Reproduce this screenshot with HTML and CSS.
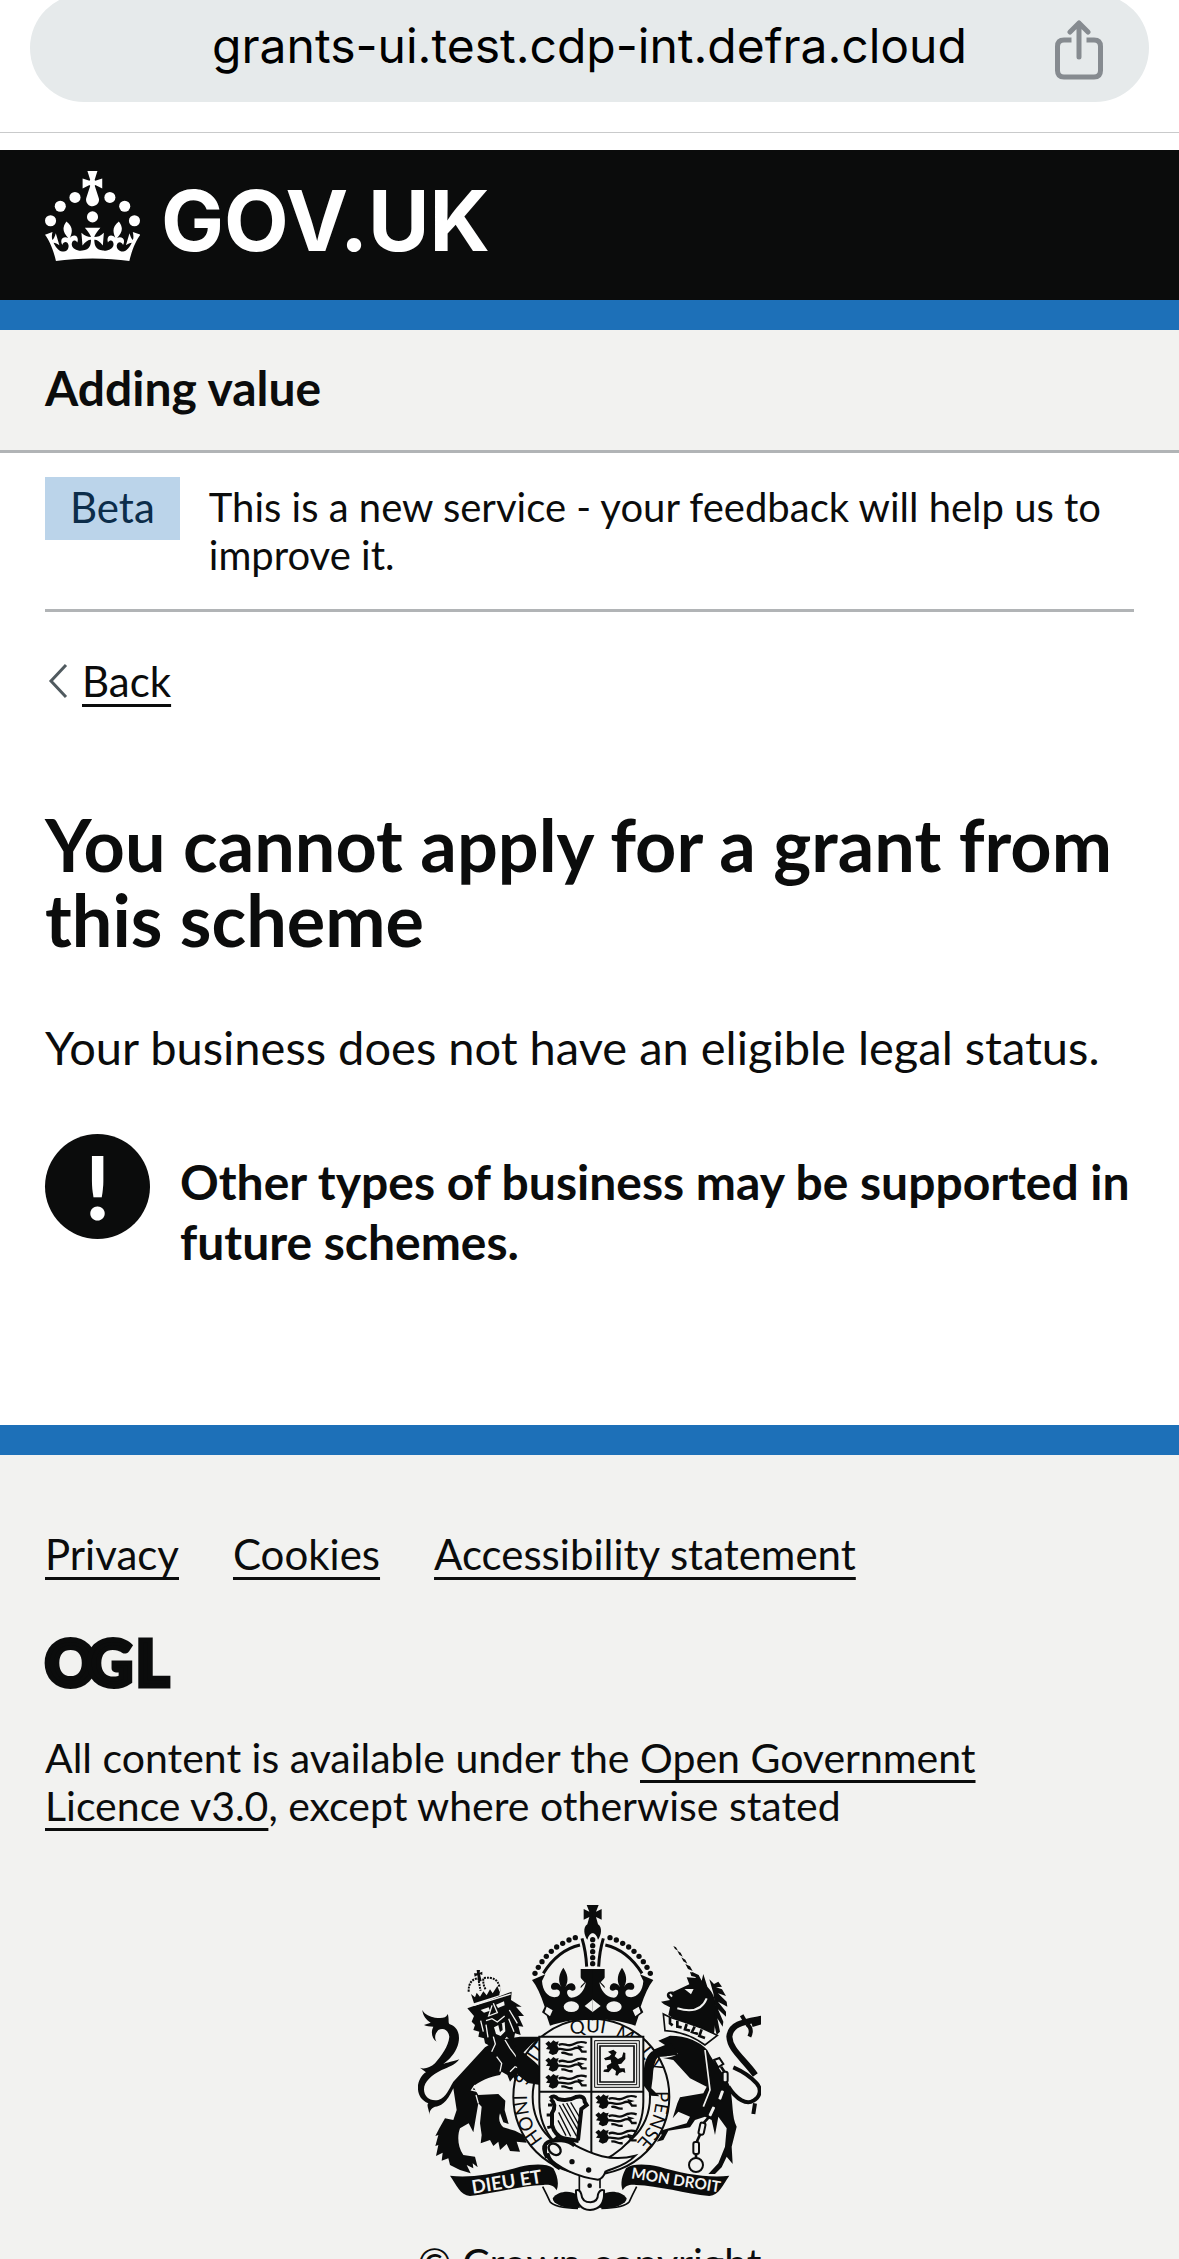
FILE: index.html
```
<!DOCTYPE html>
<html lang="en">
<head>
<meta charset="utf-8">
<meta name="viewport" content="width=device-width, initial-scale=1">
<title>You cannot apply for a grant from this scheme - Adding value</title>
<link rel="stylesheet" href="styles.css">
</head>
<body>
<div class="browser-bar">
  <div class="address">
    <input class="address-input" type="text" aria-label="Address" value="grants-ui.test.cdp-int.defra.cloud">
    <button class="share" type="button" aria-label="Share">
      <svg width="48" height="60" viewBox="0 0 48 60" fill="none" stroke="#868b90" stroke-width="5">
        <path d="M16.500 20H9q-6.500 0-6.500 6.500v24q0 6.500 6.500 6.500h30q6.500 0 6.500-6.500v-24q0-6.500-6.500-6.500h-7.500"/>
        <path d="M24 37V3M15 12l9-9 9 9" stroke-linecap="round" stroke-linejoin="round"/>
      </svg>
    </button>
  </div>
</div>

<header class="header">
  <a class="logo" href="#" aria-label="GOV.UK">
    <svg class="crown" viewBox="0 0 63.4 60" fill="#fff" aria-hidden="true">
      <circle cx="20" cy="17.600" r="3.700"/><circle cx="10.200" cy="23.500" r="3.700"/><circle cx="3.700" cy="33.200" r="3.700"/><circle cx="31.700" cy="30.600" r="3.700"/><circle cx="43.300" cy="17.600" r="3.700"/><circle cx="53.200" cy="23.500" r="3.700"/><circle cx="59.700" cy="33.200" r="3.700"/>
      <path d="M33.1,9.8c.2-.1.3-.3.5-.5l4.6,2.4v-6.8l-4.6,1.5c-.1-.2-.3-.3-.5-.5l1.9-5.9h-6.7l1.9,5.9c-.2.1-.3.3-.5.5l-4.6-1.5v6.8l4.6-2.4c.1.2.3.3.5.5l-2.6,8c-.9,2.8,1.2,5.7,4.1,5.7h0c3,0,5.1-2.9,4.1-5.7l-2.6-8ZM37,37.9s-3.4,3.8-4.1,6.1c2.2,0,4.2-.5,6.4-2.8l-.7,8.5c-2-2.8-4.4-4.1-5.7-3.8.1,3.1.5,6.7,5.8,7.2,3.7.3,6.7-1.5,7-3.8.4-2.6-2-4.3-3.7-1.6-1.4-4.5,2.4-6.1,4.9-3.2-1.9-4.5-1.8-7.7,2.4-10.9,3,4,2.6,7.3-1.2,11.1,2.4-1.3,6.2,0,4,4.6-1.2-2.8-3.7-2.2-4.2.2-.3,1.7.7,3.7,3,4.2,1.9.3,4.7-.9,7-5.9-1.3,0-2.4.7-3.9,1.7l2.4-8c.6,2.3,1.4,3.7,2.2,4.5.6-1.6.5-2.8,0-5.3l5,1.8c-2.6,3.6-5.2,8.7-7.3,17.5-7.4-1.1-15.7-1.7-24.5-1.7h0c-8.8,0-17.1.6-24.5,1.7-2.1-8.9-4.7-13.9-7.3-17.5l5-1.8c-.5,2.5-.6,3.7,0,5.3.8-.8,1.6-2.3,2.2-4.5l2.4,8c-1.5-1-2.6-1.7-3.9-1.7,2.3,5,5.2,6.2,7,5.9,2.3-.4,3.3-2.4,3-4.2-.5-2.4-3-3.1-4.2-.2-2.2-4.6,1.6-6,4-4.6-3.7-3.7-4.2-7.1-1.2-11.1,4.2,3.2,4.3,6.4,2.4,10.9,2.5-2.8,6.3-1.3,4.9,3.2-1.8-2.7-4.1-1-3.7,1.6.3,2.3,3.3,4.1,7,3.8,5.4-.5,5.7-4.2,5.8-7.2-1.3-.2-3.7,1-5.7,3.8l-.7-8.5c2.2,2.3,4.2,2.7,6.4,2.8-.7-2.3-4.1-6.1-4.1-6.1h10.6,0Z"/>
    </svg>
    <span class="logo-text">GOV.UK</span>
  </a>
</header>

<div class="service">Adding value</div>

<div class="container">
  <div class="phase">
    <strong class="tag">Beta</strong>
    <span class="phase-text">This is a new service - your feedback will help us to improve it.</span>
  </div>
  <a class="back" href="#">
    <svg class="back-arrow" width="20" height="36" viewBox="0 0 20 36" fill="none" stroke="#505a5f" stroke-width="3" aria-hidden="true"><path d="M18 2L3 18l15 16"/></svg>
    <span class="back-text">Back</span>
  </a>
  <main class="main">
    <h1 class="title">You cannot apply for a grant from this scheme</h1>
    <p class="body-text">Your business does not have an eligible legal status.</p>
    <div class="warning">
      <span class="warning-icon" aria-hidden="true">!</span>
      <strong class="warning-text">Other types of business may be supported in future schemes.</strong>
    </div>
  </main>
</div>

<footer class="footer">
  <nav class="footer-links" aria-label="Support links">
    <a class="link" href="#">Privacy</a>
    <a class="link" href="#">Cookies</a>
    <a class="link" href="#">Accessibility statement</a>
  </nav>
  <svg class="ogl" viewBox="0 0 126 50" role="img" aria-label="Open Government Licence">
    <text class="ogl-text" x="0 42 91" y="48">OGL</text>
  </svg>
  <p class="licence">All content is available under the <a class="link" href="#">Open Government Licence v3.0</a>, except where otherwise stated</p>
  <a class="copyright" href="#">
    <svg class="arms" viewBox="0 0 1029 918" fill="#0b0c0c" aria-hidden="true">
      <defs>
        <path id="garter" d="M520 768A193 193 0 0 1 520 382A193 193 0 0 1 520 768"/>
        <path id="motto-left" d="M164 866L400 829"/>
        <path id="motto-right" d="M638 820L930 866"/>
        <g id="passant">
          <path d="M0 10L10 2 16 8 24 0 32 5 40 3 36 16 42 26 34 40 22 44 10 38 14 28 2 26 8 18Z"/>
          <path d="M40 14C56 4 66 22 84 12S112 4 124 8M40 26C58 24 64 34 82 26S104 24 110 34L124 34M48 38C62 34 66 46 82 42" fill="none" stroke="#0b0c0c" stroke-width="7"/>
          <path d="M96 14l22 6-18 6z"/>
        </g>
        <g id="crown-half">
          <path d="M342 225L382 208 372 228C374 262 395 282 418 275C430 270 428 250 412 254C398 258 394 240 406 234C418 230 426 238 430 246C418 225 424 205 436 188C448 205 454 225 442 246C448 236 462 230 470 240C478 254 466 262 456 254C442 252 446 275 460 278C485 278 500 255 504 232L488 250V192H525V346C480 340 430 350 396 362L386 332 372 322 380 305Q362 250 342 225Z"/>
          <path d="M376 205Q420 135 486 120M492 100Q504 140 506 185" fill="none" stroke="#0b0c0c" stroke-width="9"/>
          <g><circle cx="351" cy="205" r="8"/><circle cx="361" cy="187" r="8"/><circle cx="372" cy="170" r="8"/><circle cx="385" cy="154" r="8"/><circle cx="400" cy="139" r="8"/><circle cx="416" cy="126" r="8"/><circle cx="434" cy="115" r="8"/><circle cx="453" cy="105" r="8"/><circle cx="472" cy="98" r="8"/></g>
          <path d="M524 0H506L514 20 497 12V44L514 36 508 58C494 66 498 92 508 104Q514 84 525 84V0Z"/>
          <g fill="#f2f2f0"><ellipse cx="460" cy="305" rx="23" ry="16"/><path d="M500 303L525 283V322ZM386 305L404 316 396 334 380 322Z"/><path d="M482 212L500 232 482 250Z"/></g>
        </g>
        <g id="ribbon">
          <path d="M96 812C160 820 240 805 306 785C346 777 386 775 406 790C418 812 424 835 416 856C408 842 396 838 376 840C310 842 226 866 156 873C126 870 116 840 96 812Z"/>
          <path d="M374 845Q386 868 396 890Q410 908 480 910" fill="none" stroke="#0b0c0c" stroke-width="5"/>
          <path d="M404 880C420 856 460 856 474 868L486 908C450 914 404 900 404 880Z"/>
        </g>
      </defs>

      <!-- lion supporter -->
      <g transform="translate(-24 -45)">
        <path d="M37 360C45 375 60 380 75 383C95 385 108 385 113 372C118 385 114 398 118 402C145 410 155 440 140 475C128 500 115 510 100 522C120 515 138 512 148 508C135 525 115 532 95 540C65 555 42 575 42 598C42 620 60 635 85 630C110 620 115 600 130 575L225 472 262 450 330 440H395L365 462 328 500 365 535 400 535 412 560 395 552 404 575 388 570 402 598 370 590 345 580 335 570 320 578 310 562 300 575 292 555 275 545 270 555C240 560 205 575 190 590L205 615 265 612 286 632 284 660 296 702 280 697 270 670C264 690 270 702 280 712L315 722 340 735 350 758 320 755 330 785 300 783 290 762 270 780 265 755 250 768 240 750 212 760 215 735 210 700 215 650 205 640 190 727 176 700 150 715C142 735 142 770 160 795L195 800 203 832 188 820 190 835 170 825 182 850 150 840 120 825 115 805 95 812 98 788 78 798 85 765 76 768 85 735 76 738 88 715 105 685 130 690 140 660 130 595C110 640 90 650 75 650C62 655 58 665 58 675C58 660 48 645 55 640C30 630 22 610 24 585C28 565 40 550 48 547L30 533C40 538 60 535 75 520C95 495 115 470 118 440C115 420 100 412 85 420C75 430 72 445 80 455C65 445 62 425 70 410C60 410 48 408 42 405L62 398C48 390 38 375 37 360Z"/>
        <path d="M172 355L200 345 305 305 303 330 335 350 318 350 342 378 325 378 340 410 325 408 332 435 315 430 310 458 290 440 262 476 240 468 225 460 222 445 205 440 208 425 190 420 195 405 185 395 192 378Z"/>
        <path d="M212 360L236 352 240 362 222 368ZM258 344L282 334 284 346 264 354ZM252 412L284 396 286 424 272 438 258 432Z" fill="#f2f2f0"/>
        <g fill="none" stroke="#f2f2f0" stroke-width="4">
          <path d="M192 346L302 312M246 346L236 378 262 368 250 340M228 392L246 386 262 396 284 378M298 360L322 400M296 386L312 425M212 392L220 425M228 404L234 442M250 440L256 462 245 485M285 450L300 475 330 515M260 500L275 520 270 545"/>
          <path d="M205 605L185 600 195 585M205 640L198 615M300 545L315 530 340 540M350 540L385 560"/>
        </g>
        <path d="M264 402L276 400 278 420 270 426Z"/>
        <path d="M183 312L176 290M192 340L183 312 195 322 200 308 210 320 220 304 230 316 240 298 248 310 262 288 270 308 272 288 268 316Z"/>
        <path d="M176 305Q175 268 205 265Q208 285 212 302M268 290Q262 258 220 264Q218 285 228 300" fill="none" stroke="#0b0c0c" stroke-width="6" stroke-dasharray="6 3"/>
        <path d="M200 240h10l-1 8 8-3v10l-7-2 5 20-10 2-3-19-8 4-2-10 9 0z"/>
      </g>

      <!-- unicorn supporter -->
      <g transform="translate(516 -45)">
        <path d="M250 168l8 4 6 10-9-5zM262 182l10 6 6 12-10-6zM274 202l12 7 6 12-12-7zM286 222l14 7 8 14-14-6zM300 246l10 2 10 14-16-4z"/>
        <path d="M213 335L240 330 232 322C226 306 240 304 250 305L298 283 290 262 318 264 305 245 326 255 335 272 340 252 352 290C372 310 382 340 378 375L372 432 330 415 290 400 250 385 235 375 240 352 222 343Z"/>
        <path d="M358 268L372 282 385 275 396 290 378 292 396 298 408 318 384 310 410 335 412 350 384 335 408 365 408 380 384 358 400 395 398 410 382 385 390 425 380 435 372 400 376 350 370 310Z"/>
        <path d="M240 312l6 8M292 300l14 0-4 8zM262 355Q330 375 350 325" fill="none" stroke="#f2f2f0" stroke-width="6"/>
        <path d="M220 372L240 382 290 398 335 414 382 436 345 465Q290 425 225 422Z" fill="#f2f2f0" stroke="#0b0c0c" stroke-width="5"/>
        <path d="M240 382V400L248 406M262 392V410L275 412M290 402L285 418 300 422M314 410L306 426 324 432M335 418L328 438 345 444" fill="none" stroke="#0b0c0c" stroke-width="8"/>
        <path d="M158 575C160 530 160 505 175 485L225 465 205 452 240 437C290 437 330 455 352 480C370 520 405 550 420 590C430 640 425 680 440 710L425 770 428 822 410 800 395 832 375 852 355 852 385 820 405 770 410 715 385 680 375 735 365 690 345 680 315 690 300 712 235 722 220 750 200 755 215 735 210 722 290 700 300 680 265 665 248 685 262 640 270 622 340 610 350 590 300 565 250 510 200 500 190 530 180 580 210 620 185 618Z"/>
        <g fill="none" stroke="#0b0c0c" stroke-width="18">
          <path d="M516 386C462 396 422 400 418 440C420 480 460 505 496 555"/>
          <path d="M415 590C440 630 470 645 490 632C510 622 516 598 500 580C484 562 460 545 430 532M455 376L470 402M470 402C485 412 485 425 478 440M516 396L486 405M495 640L490 672" stroke-width="12"/>
        </g>
        <path d="M190 500Q240 505 262 490M345 480L360 600 340 650" fill="none" stroke="#f2f2f0" stroke-width="5"/>
        <g fill="#f2f2f0" stroke="#0b0c0c" stroke-width="6">
          <path d="M372 510L388 504 400 522 384 532Z"/><rect x="398" y="545" width="15" height="32" rx="6"/><rect x="386" y="598" width="15" height="34" rx="6" transform="rotate(20 393 615)"/><rect x="358" y="646" width="15" height="36" rx="6" transform="rotate(25 365 664)"/><rect x="328" y="698" width="16" height="36" rx="6" transform="rotate(12 336 716)"/><rect x="310" y="756" width="17" height="36" rx="6"/><circle cx="318" cy="825" r="21"/>
        </g>
        <path d="M393 530L404 546M402 577L398 598M384 632L374 648M356 682L342 698M330 734L320 756M318 792V804" fill="none" stroke="#0b0c0c" stroke-width="8"/>
      </g>

      <!-- garter -->
      <circle cx="520" cy="575" r="234" fill="#f2f2f0" stroke="#0b0c0c" stroke-width="6"/>
      <circle cx="520" cy="575" r="176" fill="none" stroke="#0b0c0c" stroke-width="6"/>
      <g class="garter-text">
        <text><textPath href="#garter" startOffset="162">HONI</textPath></text>
        <text><textPath href="#garter" startOffset="336">SOIT</textPath></text>
        <text><textPath href="#garter" startOffset="545">QUI</textPath></text>
        <text><textPath href="#garter" startOffset="676">MAL Y</textPath></text>
        <text><textPath href="#garter" startOffset="892">PENSE</textPath></text>
      </g>

      <!-- forelegs over the garter -->
      <path d="M290 420L350 470 372 492 390 512 380 530 386 548 366 540 330 534 300 510Z"/>
      <path d="M676 520Q676 460 700 440L760 415 780 450 720 456Q706 470 704 520L700 550 724 574 700 572 676 540Z"/>

      <!-- shield -->
      <path d="M364 395H676V590C676 690 610 745 520 785C430 745 364 690 364 590Z" fill="#f2f2f0" stroke="#0b0c0c" stroke-width="6"/>
      <path d="M520 395V780M364 560H676" stroke="#0b0c0c" stroke-width="6"/>
      <use href="#passant" x="382" y="406"/><use href="#passant" x="382" y="456"/><use href="#passant" x="382" y="507"/>
      <use href="#passant" x="532" y="568"/><use href="#passant" x="532" y="620"/><use href="#passant" x="532" y="672"/>
      <g fill="none" stroke="#0b0c0c"><path d="M530 407H664V547H530Z" stroke-width="3"/><path d="M538 415H656V539H538Z" stroke-width="3"/><path d="M546 423H648V531H546Z" stroke-width="5"/></g>
      <path d="M570 440l16-6 10 8-6 12 10 8 12-6 4-14 6 2 0 18-12 14-10 2 6 12 14 0 2 14-8-4-10 4-6 8-6-2 2-12-12-8-10 12-16-2 2-6 10-2-2-10 14-8-2-10-16 2-4-6 16-6 6-6z"/>
      <g fill="none" stroke="#0b0c0c">
        <path d="M396 580Q408 568 420 582Q450 590 474 576Q500 570 500 590L506 600 490 612 480 706M398 582Q418 600 402 624V660Q410 690 436 700L482 708" stroke-width="12"/>
        <path d="M424 600L476 694M434 596L482 680M446 594L484 662M458 592L488 642M422 622L458 694M420 646L444 692" stroke-width="4"/>
        <path d="M402 600l-12 0M400 630l-14 0M404 664l-16 4M420 694l-12 12" stroke-width="9"/>
      </g>

      <!-- buckle and strap -->
      <path d="M384 720C400 696 440 700 462 716C520 748 580 772 652 752C620 786 580 790 562 800Q556 820 540 824C480 816 420 790 384 750Z" fill="#f2f2f0" stroke="#0b0c0c" stroke-width="6"/>
      <path d="M388 758C366 720 382 704 430 706Q456 708 470 722M388 745Q396 776 426 790" fill="none" stroke="#0b0c0c" stroke-width="12"/>
      <ellipse cx="410" cy="733" rx="20" ry="15" fill="#f2f2f0" stroke="#0b0c0c" stroke-width="7" transform="rotate(40 410 733)"/>
      <circle cx="462" cy="770" r="8"/><circle cx="512" cy="795" r="8"/><circle cx="515" cy="842" r="7"/>
      <path d="M484 812V856M546 822V850" stroke="#0b0c0c" stroke-width="5"/>

      <use href="#ribbon"/><use href="#ribbon" transform="translate(1030 0) scale(-1 1)"/>
      <path d="M474 856Q486 852 490 868Q492 892 518 892Q540 890 540 868Q546 852 558 856Q562 912 516 915Q472 912 474 856Z" fill="#f2f2f0" stroke="#0b0c0c" stroke-width="6"/>
      <g class="motto-text">
        <text class="motto-left"><textPath href="#motto-left">DIEU ET</textPath></text>
        <text class="motto-right"><textPath href="#motto-right">MON DROIT</textPath></text>
      </g>

      <!-- royal crown -->
      <use href="#crown-half"/><use href="#crown-half" transform="translate(1048 0) scale(-1 1)"/>
      <g><circle cx="524" cy="104" r="8"/><circle cx="524" cy="122" r="8"/><circle cx="524" cy="140" r="8"/><circle cx="524" cy="158" r="8"/><circle cx="524" cy="176" r="8"/></g>
    </svg>
    <span>© Crown copyright</span>
  </a>
</footer>
</body>
</html>
```
FILE: styles.css
```
* { box-sizing: border-box; }

body {
  margin: 0;
  background: #fff;
  color: #0b0c0c;
  font-family: Lato, "Liberation Sans", sans-serif;
  font-size: 41px;
  line-height: 48px;
}

a { color: inherit; }
p, h1 { margin: 0; }
svg { display: block; }

/* Browser address bar, scrolled partly out of view */
.browser-bar {
  height: 133px;
  padding: 0 30px;
  border-bottom: 1px solid #c9cacb;
  overflow: hidden;
}
.address {
  display: flex;
  align-items: center;
  height: 108px;
  margin-top: -6px;
  padding-left: 140px;
  border-radius: 54px;
  background: #e6eaeb;
}
.address-input {
  flex: 1;
  min-width: 0;
  padding: 0 0 4px;
  border: 0;
  background: none;
  color: #000;
  font: 400 48px/60px Inter, sans-serif;
  text-align: center;
}
.share {
  display: flex;
  justify-content: center;
  width: 140px;
  padding: 4px 0 0;
  border: 0;
  background: none;
}

.header {
  margin-top: 17px;
  padding: 21px 45px 39px;
  border-bottom: 30px solid #1d70b8;
  background: #0b0c0c;
}
.logo {
  display: inline-flex;
  align-items: flex-start;
  gap: 21px;
  height: 90px;
  color: #fff;
  text-decoration: none;
  vertical-align: top;
}
.crown { width: 95px; height: 90px; }
.logo-text { padding-top: 8px; font: 700 84px/84px Inter, sans-serif; }

.service {
  padding: 28px 45px 32px;
  border-bottom: 3px solid #b1b4b6;
  background: #f2f2f0;
  font-size: 48px;
  font-weight: 700;
  line-height: 60px;
}

.container { padding: 0 45px; }

.phase {
  display: flex;
  align-items: flex-start;
  gap: 29px;
  padding: 24px 0 30px;
  border-bottom: 3px solid #b1b4b6;
}
.tag {
  padding: 6px 25px 9px;
  background: #bbd4ea;
  color: #0c2d4a;
  font-size: 42px;
  font-weight: 400;
}
.phase-text { padding-top: 6px; font-size: 40px; }

.back {
  display: inline-flex;
  align-items: center;
  gap: 14px;
  margin-top: 45px;
  padding-left: 3px;
  font-size: 42px;
  text-decoration: none;
  vertical-align: top;
}
.back-text, .link {
  text-decoration: underline;
  text-decoration-thickness: 3px;
  text-underline-offset: 7px;
}

.main { padding: 102px 0 153px; }
.title { font-size: 72px; line-height: 75px; }
.body-text { margin-top: 60px; font-size: 47px; line-height: 60px; }
.warning {
  display: flex;
  align-items: flex-start;
  gap: 30px;
  margin-top: 57px;
}
.warning-icon {
  flex: none;
  width: 105px;
  height: 105px;
  border-radius: 50%;
  background: #0b0c0c;
  color: #fff;
  font-size: 88px;
  font-weight: 900;
  line-height: 105px;
  text-align: center;
}
.warning-text { padding-top: 18px; font-size: 48px; line-height: 60px; }

.footer {
  padding: 75px 45px 60px;
  border-top: 30px solid #1d70b8;
  background: #f2f2f0;
}
.footer-links { display: flex; flex-wrap: wrap; column-gap: 54px; font-size: 42px; }
.ogl { width: 126px; height: 50px; margin-top: 60px; overflow: visible; }
.ogl-text {
  fill: #0b0c0c;
  stroke: #0b0c0c;
  stroke-width: 5px;
  font: 900 63px Lato, sans-serif;
}
.licence { max-width: 960px; margin-top: 46px; }
.copyright {
  display: flex;
  flex-direction: column;
  align-items: center;
  gap: 28px;
  margin-top: 75px;
  text-decoration: none;
}
.arms { width: 343px; height: 306px; }
.garter-text { font: 400 56px Lato, sans-serif; }
.motto-text { fill: #f2f2f0; font-family: Lato, sans-serif; font-weight: 700; }
.motto-left { font-size: 56px; }
.motto-right { font-size: 46px; }
```
